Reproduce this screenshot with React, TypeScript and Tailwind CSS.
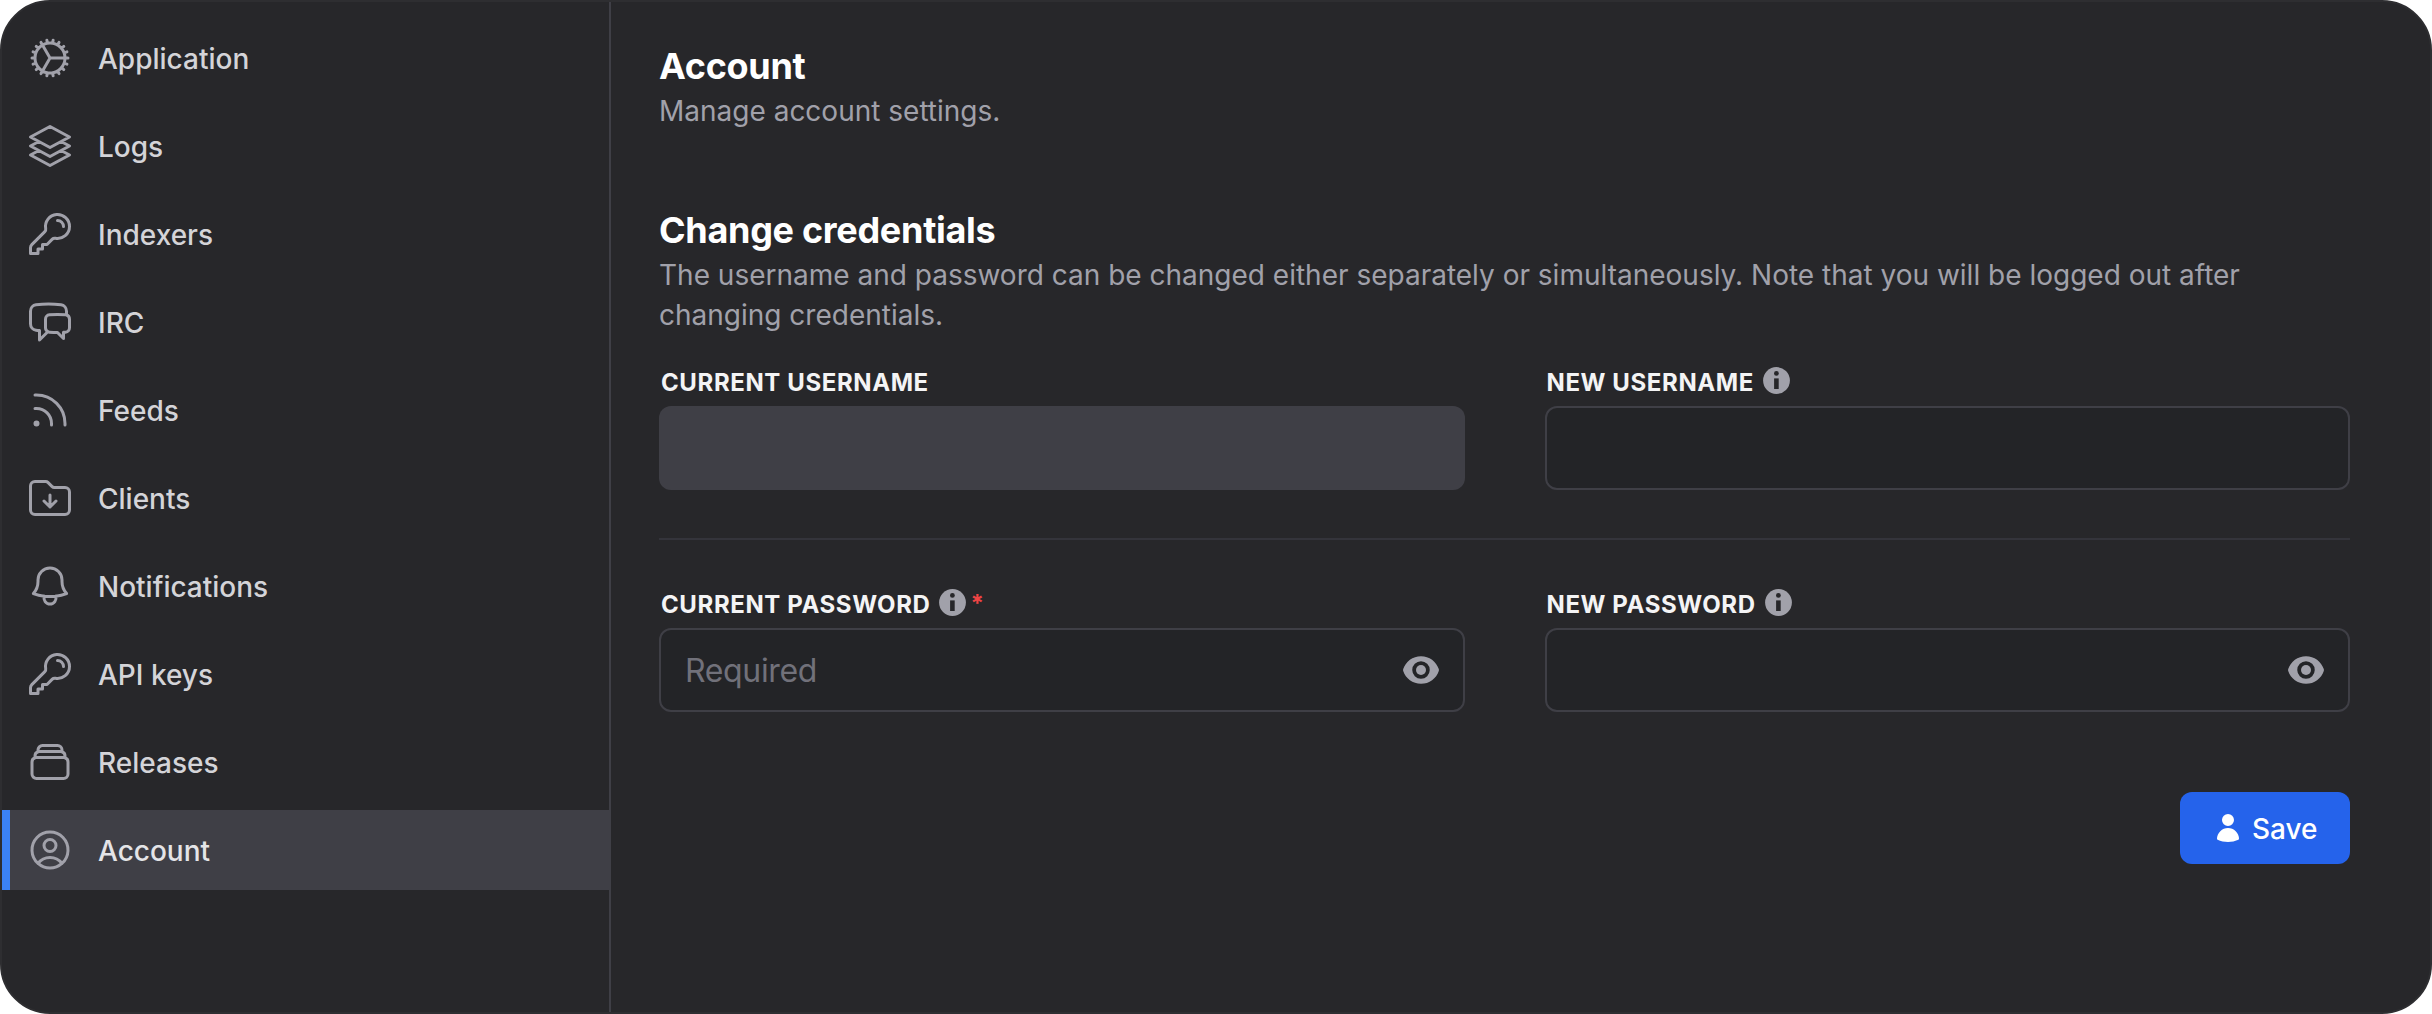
import type { ReactNode } from "react";
import type { IconType } from "react-icons";
import {
  HiEye,
  HiOutlineBell,
  HiOutlineChatBubbleLeftRight,
  HiOutlineCog,
  HiOutlineFolderArrowDown,
  HiOutlineKey,
  HiOutlineRectangleStack,
  HiOutlineRss,
  HiOutlineSquare3Stack3D,
  HiOutlineUserCircle,
  HiUser,
} from "react-icons/hi2";

const navItems: { label: string; icon: IconType; active?: boolean }[] = [
  { label: "Application", icon: HiOutlineCog },
  { label: "Logs", icon: HiOutlineSquare3Stack3D },
  { label: "Indexers", icon: HiOutlineKey },
  { label: "IRC", icon: HiOutlineChatBubbleLeftRight },
  { label: "Feeds", icon: HiOutlineRss },
  { label: "Clients", icon: HiOutlineFolderArrowDown },
  { label: "Notifications", icon: HiOutlineBell },
  { label: "API keys", icon: HiOutlineKey },
  { label: "Releases", icon: HiOutlineRectangleStack },
  { label: "Account", icon: HiOutlineUserCircle, active: true },
];

function Sidebar() {
  return (
    <aside className="w-[607px] shrink-0 pt-4">
      <nav className="flex flex-col gap-2">
        {navItems.map(({ label, icon: Icon, active }) => (
          <a
            key={label}
            className={
              active
                ? "flex h-20 items-center border-l-8 border-[#3b82f6] bg-[#3f3f46] pl-4 text-[28px] font-medium text-[#e4e4e7]"
                : "flex h-20 items-center border-l-8 border-transparent pl-4 text-[28px] font-medium text-[#d4d4d8]"
            }
          >
            <Icon className="size-12 shrink-0 text-[#a1a1aa]" />
            <span className="ml-6 pt-[2px]">{label}</span>
          </a>
        ))}
      </nav>
    </aside>
  );
}

function InfoIcon() {
  return (
    <svg viewBox="0 0 27 27" className="mb-[3px] ml-[9px] size-[27px] text-[#a1a1aa]" fill="none">
      <circle cx="13.5" cy="13.5" r="13.4" fill="currentColor" />
      <circle cx="13.4" cy="6.4" r="2.4" fill="#27272a" />
      <rect x="11.1" y="11.4" width="4.6" height="10.6" fill="#27272a" />
    </svg>
  );
}

type FieldProps = {
  label: string;
  info?: boolean;
  required?: boolean;
  disabled?: boolean;
  secret?: boolean;
  placeholder?: string;
};

function Field({ label, info, required, disabled, secret, placeholder }: FieldProps) {
  return (
    <div className="min-w-0 flex-1">
      <div className="flex h-8 items-center pl-[2px] text-[24px] font-bold tracking-[0.6px] text-[#f4f4f5]">
        <span className="pt-[2px]">{label}</span>
        {info && <InfoIcon />}
        {required && <span className="ml-1 text-[#ef4444]">*</span>}
      </div>
      <div
        className={
          disabled
            ? "mt-2 flex h-[84px] items-center rounded-xl bg-[#3f3f46]"
            : "mt-2 flex h-[84px] items-center rounded-xl border-2 border-[#3f3f46] bg-[#232427] pr-[22px] pl-6"
        }
      >
        <span className="flex-1 pt-[2px] text-[32px] tracking-[-0.35px] text-[#71717a]">{placeholder}</span>
        {secret && <HiEye className="size-10 text-[#a1a1aa]" />}
      </div>
    </div>
  );
}

function Heading({ title, children }: { title: string; children: ReactNode }) {
  return (
    <div>
      <h2 className="mb-px text-[36px] leading-[48px] font-bold tracking-[-0.3px] text-white">{title}</h2>
      <p className="text-[28px] leading-10 text-[#a1a1aa]">{children}</p>
    </div>
  );
}

export default function App() {
  return (
    <div className="h-[1014px] w-[2432px] bg-white font-[Inter,sans-serif]">
      <div className="flex h-full w-full overflow-hidden rounded-[50px] border-2 border-[#2e2e31] bg-[#27272a]">
        <Sidebar />
        <main className="flex min-w-0 flex-1 flex-col border-l-2 border-[#3f3f46] pt-10 pr-20 pl-12">
          <Heading title="Account">Manage account settings.</Heading>
          <div className="mt-[75px]">
            <Heading title="Change credentials">
              The username and password can be changed either separately or simultaneously. Note that you will be logged out after
              changing credentials.
            </Heading>
          </div>
          <div className="mt-[31px] flex gap-20">
            <Field label="CURRENT USERNAME" disabled />
            <Field label="NEW USERNAME" info />
          </div>
          <hr className="mt-12 border-0 border-t-2 border-[#34343b]" />
          <div className="mt-12 flex gap-20">
            <Field label="CURRENT PASSWORD" info required secret placeholder="Required" />
            <Field label="NEW PASSWORD" info secret />
          </div>
          <div className="mt-20 flex justify-end">
            <button className="flex h-[72px] w-[170px] items-center rounded-xl bg-[#2563eb] pl-8 text-[28px] font-medium text-white">
              <HiUser className="size-8" />
              <span className="ml-2 pt-[2px]">Save</span>
            </button>
          </div>
        </main>
      </div>
    </div>
  );
}
